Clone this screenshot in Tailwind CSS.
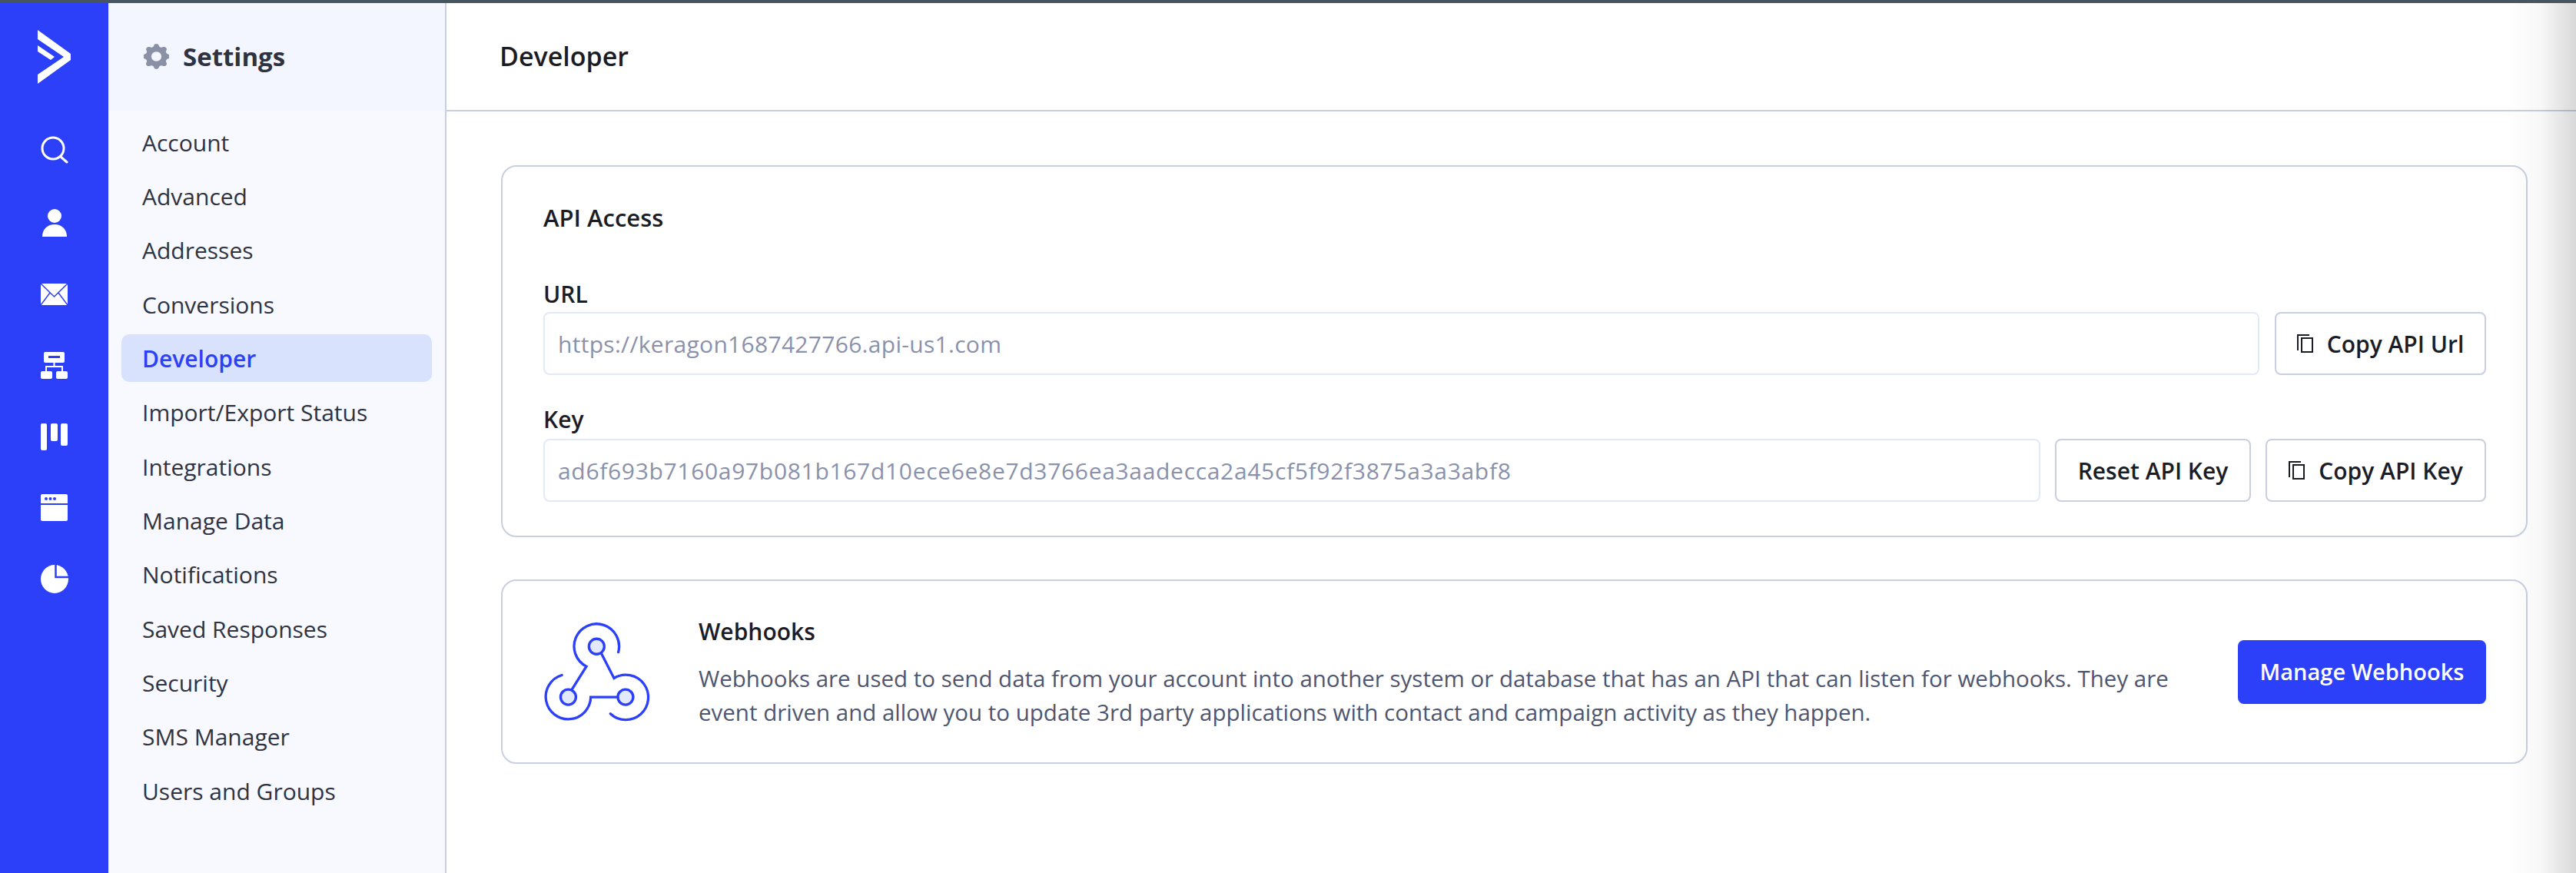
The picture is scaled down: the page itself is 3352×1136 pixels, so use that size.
<!DOCTYPE html>
<html lang="en">
<head>
<meta charset="UTF-8">
<title>Developer Settings</title>
<script src="https://cdn.jsdelivr.net/npm/@tailwindcss/browser@4"></script>
</head>
<body class="bg-white">
<div class="relative w-[3352px] h-[1136px] overflow-hidden flex flex-col font-['Open_Sans',sans-serif] text-[30px] text-[#2f3341]">
    <div class="h-[4px] bg-[#46555f]"></div>
    <div class="flex flex-1 min-h-0">
        <!-- icon rail -->
        <aside class="w-[141px] bg-[#2b40f8] flex flex-col items-center pt-[35px]">
            <svg class="w-[43px] h-[70px]" viewBox="51 39 43 70" fill="#fff"><path d="M51 39 94 70V78L51 109V97L85 74 51 51Z"/><path d="M51 59 73 74 68 78 51 67Z"/></svg>
            <svg class="w-[36px] h-[36px] mt-[68px]" viewBox="52 177 36 36" fill="none" stroke="#fff" stroke-width="3" stroke-linecap="round"><circle cx="68" cy="193" r="14"/><path d="M78 204 86 211"/></svg>
            <svg class="w-[32px] h-[36px] mt-[59px]" viewBox="55 271 32 36" fill="#fff"><circle cx="71" cy="280" r="9"/><path d="M55 307C55 297 62 291 71 291S87 297 87 307Z"/></svg>
            <svg class="w-[35px] h-[28px] mt-[61px]" viewBox="53 368 35 28"><rect x="53" y="368" width="35" height="28" fill="#fff"/><path d="M53 368 70.500 385 88 368M53 396 65 380M88 396 76 380" fill="none" stroke="#2b40f8" stroke-width="1.500"/></svg>
            <svg class="w-[35px] h-[35px] mt-[61px]" viewBox="53 457 35 35" fill="#fff"><rect x="57" y="457" width="27" height="14" rx="2"/><rect x="63" y="462" width="15" height="3" fill="#2b40f8"/><path d="M70.500 471V476M60 482V476H81V482" fill="none" stroke="#fff" stroke-width="2"/><rect x="53" y="482" width="15" height="10" rx="2"/><rect x="73" y="482" width="15" height="10" rx="2"/></svg>
            <svg class="w-[35px] h-[35px] mt-[58px]" viewBox="53 550 35 35" fill="#fff"><rect x="53" y="550" width="8" height="35" rx="2"/><rect x="66" y="550" width="9" height="23" rx="2"/><rect x="79" y="550" width="9" height="29" rx="2"/></svg>
            <svg class="w-[35px] h-[35px] mt-[57px]" viewBox="53 642 35 35"><rect x="53" y="642" width="35" height="35" rx="2" fill="#fff"/><rect x="53" y="654" width="35" height="2" fill="#2b40f8"/><circle cx="60" cy="648" r="2" fill="#2b40f8"/><circle cx="65.500" cy="648" r="2" fill="#2b40f8"/><circle cx="71" cy="648" r="2" fill="#2b40f8"/></svg>
            <svg class="w-[36px] h-[37px] mt-[57px]" viewBox="52.500 734 36 37"><ellipse cx="70.500" cy="752.500" rx="18" ry="18.500" fill="#fff"/><path d="M72 733V750H90" fill="none" stroke="#2b40f8" stroke-width="2.500"/></svg>
        </aside>

        <!-- settings menu -->
        <nav class="w-[440px] border-r-2 border-[#c9cfe0] bg-[#f7f9ff]">
            <div class="h-[140px] bg-[#f3f6ff] flex items-center gap-[18px] pl-[46px] pb-[1px]">
                <svg class="w-[33px] h-[33px]" viewBox="2.500 2 15 16" preserveAspectRatio="none" fill="#8a90a6"><path fill-rule="evenodd" clip-rule="evenodd" d="M11.490 3.170c-.38-1.560-2.600-1.560-2.980 0a1.532 1.532 0 01-2.286.948c-1.372-.836-2.942.734-2.106 2.106.54.886.061 2.042-.947 2.287-1.561.379-1.561 2.600 0 2.978a1.532 1.532 0 01.947 2.287c-.836 1.372.734 2.942 2.106 2.106a1.532 1.532 0 012.287.947c.379 1.561 2.600 1.561 2.978 0a1.533 1.533 0 012.287-.947c1.372.836 2.942-.734 2.106-2.106a1.533 1.533 0 01.947-2.287c1.561-.379 1.561-2.600 0-2.978a1.532 1.532 0 01-.947-2.287c.836-1.372-.734-2.942-2.106-2.106a1.532 1.532 0 01-2.287-.947zM10 13a3 3 0 100-6 3 3 0 000 6z"/></svg>
                <span class="text-[33px] font-bold text-[#2f3341]">Settings</span>
            </div>
            <ul class="flex flex-col gap-[8.350px] pt-[10px] px-[17px]">
                <li class="h-[62px] flex items-center px-[27px]">Account</li>
                <li class="h-[62px] flex items-center px-[27px]">Advanced</li>
                <li class="h-[62px] flex items-center px-[27px]">Addresses</li>
                <li class="h-[62px] flex items-center px-[27px]">Conversions</li>
                <li class="h-[62px] flex items-center px-[27px] rounded-[10px] bg-[#d9e2fc] text-[#2b40f8] font-semibold">Developer</li>
                <li class="h-[62px] flex items-center px-[27px]">Import/Export Status</li>
                <li class="h-[62px] flex items-center px-[27px]">Integrations</li>
                <li class="h-[62px] flex items-center px-[27px]">Manage Data</li>
                <li class="h-[62px] flex items-center px-[27px]">Notifications</li>
                <li class="h-[62px] flex items-center px-[27px]">Saved Responses</li>
                <li class="h-[62px] flex items-center px-[27px]">Security</li>
                <li class="h-[62px] flex items-center px-[27px]">SMS Manager</li>
                <li class="h-[62px] flex items-center px-[27px]">Users and Groups</li>
            </ul>
        </nav>

        <!-- main -->
        <main class="flex-1 min-w-0">
            <header class="h-[141px] border-b-2 border-[#c9cfe0] flex items-center pl-[69px]">
                <h1 class="text-[34px] font-semibold text-[#1b1d26]">Developer</h1>
            </header>
            <div class="pt-[70px] pl-[71px] pr-[63px] flex flex-col gap-[55px]">
                <section class="h-[484px] rounded-[20px] border-2 border-[#c9cfe0] pl-[53px] pr-[52px] pt-[46px]">
                    <h2 class="h-[40px] leading-[40px] text-[31px] font-semibold text-[#1b1d26]">API Access</h2>
                    <label class="block h-[40px] leading-[40px] mt-[60px] font-semibold text-[#1b1d26]">URL</label>
                    <div class="flex gap-[20px] mt-[3px] h-[82px]">
                        <div class="flex-1 flex items-center pl-[17px] rounded-[8px] border-2 border-[#e2e9f8] text-[#8a91ab] tracking-[0.3px]">https://keragon1687427766.api-us1.com</div>
                        <button class="w-[275px] flex items-center justify-center gap-[18px] rounded-[8px] border-2 border-[#c9cfe0] font-semibold text-[#1b1d26]">
                            <svg class="w-[21px] h-[24px]" viewBox="0 0 21 24" fill="none" stroke="#1b1d26" stroke-width="2"><path d="M1 21V1H16"/><rect x="6" y="5" width="14" height="18"/></svg>
                            Copy API Url
                        </button>
                    </div>
                    <label class="block h-[40px] leading-[40px] mt-[38px] font-semibold text-[#1b1d26]">Key</label>
                    <div class="flex gap-[19px] mt-[5px] h-[82px]">
                        <div class="flex-1 flex items-center pl-[17px] rounded-[8px] border-2 border-[#e2e9f8] text-[#8a91ab] tracking-[0.68px]">ad6f693b7160a97b081b167d10ece6e8e7d3766ea3aadecca2a45cf5f92f3875a3a3abf8</div>
                        <button class="w-[255px] flex items-center justify-center rounded-[8px] border-2 border-[#c9cfe0] font-semibold text-[#1b1d26]">Reset API Key</button>
                        <button class="w-[287px] flex items-center justify-center gap-[18px] rounded-[8px] border-2 border-[#c9cfe0] font-semibold text-[#1b1d26]">
                            <svg class="w-[21px] h-[24px]" viewBox="0 0 21 24" fill="none" stroke="#1b1d26" stroke-width="2"><path d="M1 21V1H16"/><rect x="6" y="5" width="14" height="18"/></svg>
                            Copy API Key
                        </button>
                    </div>
                </section>

                <section class="h-[240px] rounded-[20px] border-2 border-[#c9cfe0] flex items-center pl-[53px] pr-[52px]">
                    <svg class="w-[140px] h-[133px] shrink-0" viewBox="200 200 420 400" fill="none" stroke="#2b40f8" stroke-width="10" stroke-linecap="round"><circle cx="408" cy="300" r="30" fill="#e3e9fc"/><circle cx="297" cy="498" r="30" fill="#e3e9fc"/><circle cx="521" cy="498" r="30" fill="#e3e9fc"/><path d="M493 322A88 88 0 1 0 368 378L310 470"/><path d="M428 330 476 424A88 88 0 1 1 462 563"/><path d="M272 412A88 88 0 1 0 385 498H491"/></svg>
                    <div class="ml-[62px] mt-[3px] flex-1">
                        <h2 class="h-[40px] leading-[40px] font-semibold text-[#1b1d26]">Webhooks</h2>
                        <p class="mt-[19px] leading-[44px] text-[29.500px] text-[#4f5670]">Webhooks are used to send data from your account into another system or database that has an API that can listen for webhooks. They are<br>event driven and allow you to update 3rd party applications with contact and campaign activity as they happen.</p>
                    </div>
                    <button class="w-[323px] h-[83px] shrink-0 rounded-[8px] bg-[#2b40f8] text-white text-[29px] font-semibold">Manage Webhooks</button>
                </section>
            </div>
        </main>
    </div>
    <!-- drawer shadow on the right edge -->
    <div class="absolute top-[4px] bottom-0 right-0 w-[92px] bg-gradient-to-r from-white/0 via-black/3 to-black/15"></div>
</div>
</body>
</html>
